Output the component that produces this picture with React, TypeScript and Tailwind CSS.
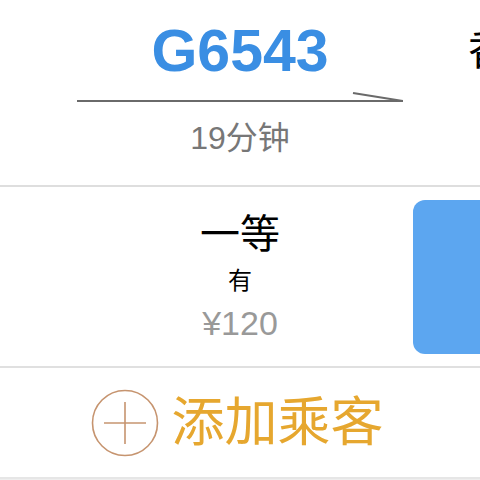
import React from "react";

export default function App() {
  const font = { fontFamily: '"Liberation Sans", "Noto Sans CJK SC", sans-serif' };
  return (
    <div className="w-[480px] h-[480px] overflow-hidden bg-white" style={font}>
      {/* top */}
      <div className="h-[187px] flex border-b-2 border-[#dedede] bg-white">
        <div className="ml-[77px] w-[326px] flex flex-col items-center shrink-0">
          <div className="mt-[22px] h-[58px] text-[59px] leading-[58px] font-bold text-[#3a8ee3]">G6543</div>
          <svg width="326" height="14" viewBox="0 0 326 14" className="mt-[12px] block">
            <line x1="0" y1="9" x2="326" y2="9" stroke="#6a6a6a" strokeWidth="2" />
            <line x1="276" y1="1" x2="326" y2="9" stroke="#6a6a6a" strokeWidth="2" />
          </svg>
          <div className="mt-[16px] text-[32px] leading-[32px] text-[#777777]">19分钟</div>
        </div>
        <div className="ml-[65px] mt-[30px] text-[42px] leading-[42px] text-black shrink-0 whitespace-nowrap">香港</div>
      </div>
      {/* seat row */}
      <div className="h-[181px] flex items-center border-b-2 border-[#e0e0e0]">
        <div className="ml-[77px] w-[326px] flex flex-col items-center shrink-0">
          <div className="text-[40px] leading-[40px] text-black">一等</div>
          <div className="mt-[15px] text-[24px] leading-[24px] text-black">有</div>
          <div className="mt-[13px] text-[34px] leading-[34px] text-[#999999]">¥120</div>
        </div>
        <div className="ml-[10px] w-[120px] h-[154px] rounded-[12px] bg-[#5ca6f0] shrink-0" />
      </div>
      {/* add passenger */}
      <div className="h-[111px] flex items-center justify-center border-b-2 border-[#e6e6e6]">
        <div className="flex items-center gap-[13px] ml-[-6px]">
          <svg width="68" height="68" viewBox="0 0 68 68">
            <circle cx="34" cy="34" r="32.5" fill="none" stroke="#c6946f" strokeWidth="1.6" />
            <line x1="13" y1="34" x2="55" y2="34" stroke="#c6946f" strokeWidth="1.6" />
            <line x1="34" y1="13" x2="34" y2="55" stroke="#c6946f" strokeWidth="1.6" />
          </svg>
          <div className="text-[53px] leading-[53px] text-[#e6a72f]">添加乘客</div>
        </div>
      </div>
      <div className="h-[10px] bg-[#eeeeee]" />
    </div>
  );
}
